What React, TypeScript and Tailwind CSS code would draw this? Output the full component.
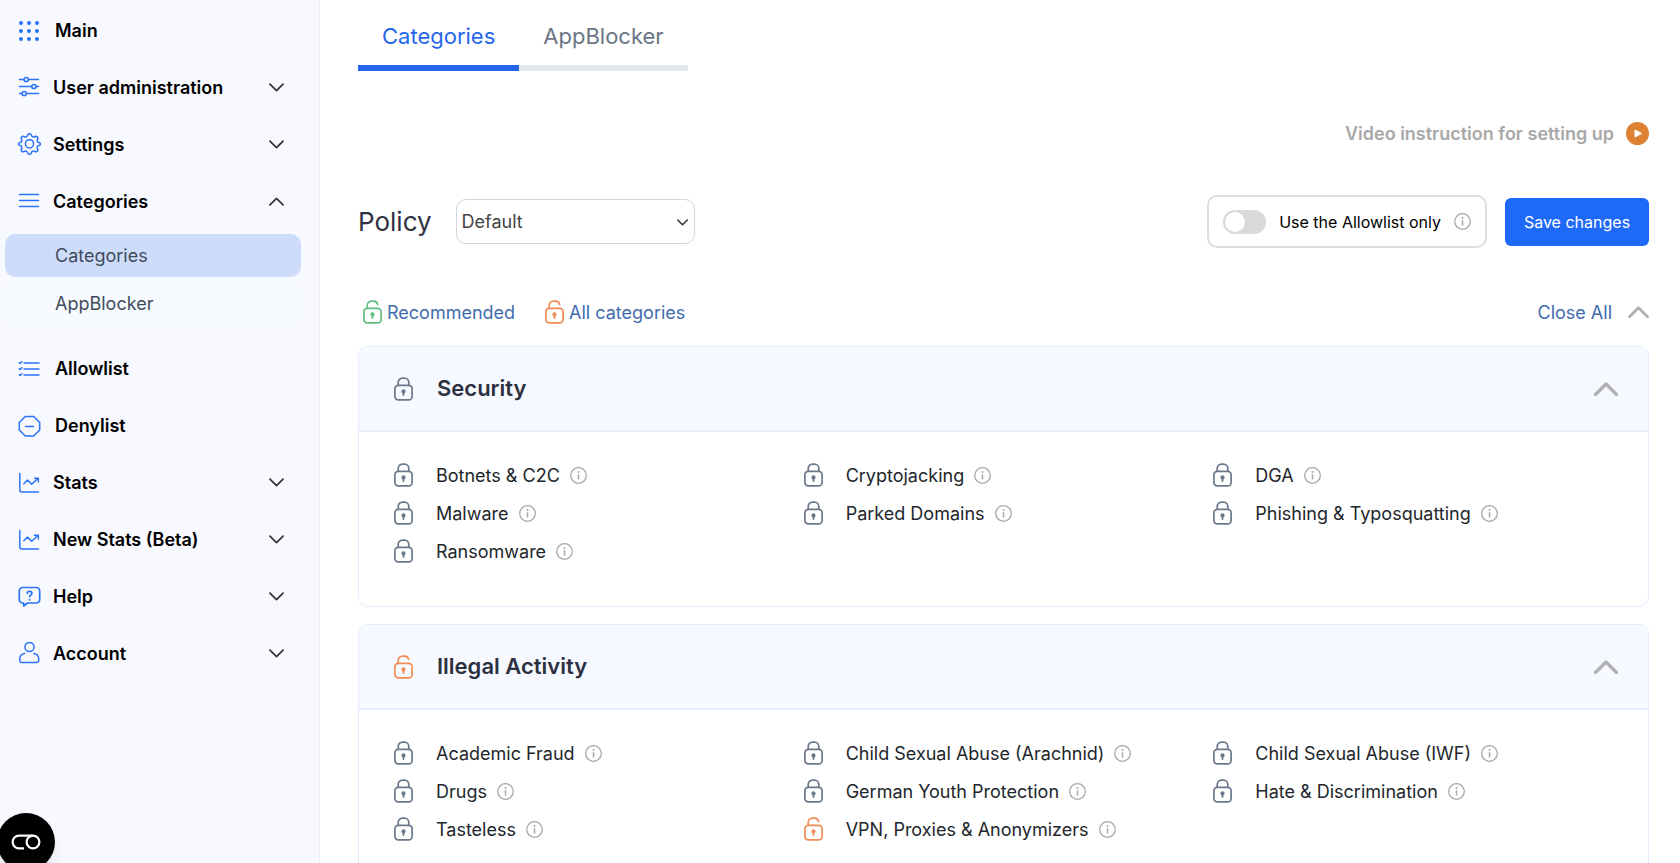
import { useState } from 'react';
import type { ReactNode } from 'react';

type LockState = 'locked' | 'open' | 'recommended';

type Category = { name: string; lock: LockState };

type Group = { title: string; lock: LockState; items: Category[] };

const groups: Group[] = [
  {
    title: 'Security',
    lock: 'locked',
    items: [
      { name: 'Botnets & C2C', lock: 'locked' },
      { name: 'Cryptojacking', lock: 'locked' },
      { name: 'DGA', lock: 'locked' },
      { name: 'Malware', lock: 'locked' },
      { name: 'Parked Domains', lock: 'locked' },
      { name: 'Phishing & Typosquatting', lock: 'locked' },
      { name: 'Ransomware', lock: 'locked' },
    ],
  },
  {
    title: 'Illegal Activity',
    lock: 'open',
    items: [
      { name: 'Academic Fraud', lock: 'locked' },
      { name: 'Child Sexual Abuse (Arachnid)', lock: 'locked' },
      { name: 'Child Sexual Abuse (IWF)', lock: 'locked' },
      { name: 'Drugs', lock: 'locked' },
      { name: 'German Youth Protection', lock: 'locked' },
      { name: 'Hate & Discrimination', lock: 'locked' },
      { name: 'Tasteless', lock: 'locked' },
      { name: 'VPN, Proxies & Anonymizers', lock: 'open' },
    ],
  },
];

const lockColors = {
  locked: 'text-[#6b788c]',
  open: 'text-[#f08c56]',
  recommended: 'text-[#5fbf7e]',
};

function LockIcon({ state }: { state: LockState }) {
  return (
    <svg width="19" height="24" viewBox="0 0 19 24" fill="none" stroke="currentColor" strokeWidth="1.7" strokeLinecap="round" className={lockColors[state]} aria-hidden="true">
      <rect x="0.9" y="8.4" width="17.2" height="14.4" rx="3.4" />
      {state === 'locked' ? (
        <path d="M4.2 8.2V5.4A4.3 4.3 0 0 1 8.5 1.100h2A4.3 4.3 0 0 1 14.8 5.4v2.8" />
      ) : (
        <path d="M4.2 8.2V5.4A4.3 4.3 0 0 1 8.5 1.100h2c2.200 0 3.700 1.200 4.100 3.200" />
      )}
      <circle cx="9.5" cy="14.400" r="2.100" fill="currentColor" stroke="none" />
      <path d="M9.500 15v3" strokeWidth="1.800" />
    </svg>
  );
}

function InfoIcon() {
  return (
    <svg width="17" height="17" viewBox="0 0 17 17" fill="none" stroke="#a9a9a9" aria-hidden="true">
      <circle cx="8.5" cy="8.5" r="7.800" strokeWidth="1.300" />
      <path d="M8.500 7.200v5.400" strokeWidth="1.500" />
      <circle cx="8.500" cy="4.900" r="1" fill="#a9a9a9" stroke="none" />
    </svg>
  );
}

function Chevron({ up = false, className }: { up?: boolean; className: string }) {
  return (
    <svg viewBox="0 0 24 14" fill="none" stroke="currentColor" strokeLinecap="round" strokeLinejoin="round" className={className} aria-hidden="true">
      <path d={up ? 'M1.500 12.500 12 2l10.500 10.500' : 'M1.500 1.500 12 12 22.500 1.500'} />
    </svg>
  );
}

function MenuIcon({ children }: { children: ReactNode }) {
  return (
    <svg width="23" height="23" viewBox="0 0 23 23" fill="none" stroke="#2a73f8" strokeWidth="1.500" strokeLinecap="round" strokeLinejoin="round" className="shrink-0" aria-hidden="true">
      {children}
    </svg>
  );
}

const dots = [3, 11, 19];

const icons = {
  main: (
    <MenuIcon>
      {dots.map((y) => dots.map((x) => <circle key={`${x}-${y}`} cx={x} cy={y + 1} r="2" fill="#2a73f8" stroke="none" />))}
    </MenuIcon>
  ),
  sliders: (
    <MenuIcon>
      <path d="M1.500 3.500H6M10.500 3.500h10M1.500 10.500H13.500M18 10.500h2.500M1.500 17.500H4M8.500 17.500h12" />
      <circle cx="8.200" cy="3.500" r="2.100" />
      <circle cx="15.900" cy="10.500" r="2.100" />
      <circle cx="6.200" cy="17.500" r="2.100" />
    </MenuIcon>
  ),
  gear: (
    <MenuIcon>
      <circle cx="11.500" cy="10.800" r="4.100" />
      <path d="M9.500 2.300C9.900.2 13.100.2 13.500 2.300c.3 1.500 2 2.200 3.200 1.300 1.800-1.200 4 1 2.800 2.800-.9 1.200-.2 2.900 1.300 3.200 2.100.4 2.100 2.400 0 2.800-1.500.3-2.200 2-1.300 3.200 1.200 1.800-1 4-2.800 2.800-1.200-.9-2.900-.2-3.200 1.300-.4 2.100-3.600 2.100-4 0-.3-1.500-2-2.200-3.200-1.300-1.800 1.200-4-1-2.800-2.800.9-1.200.2-2.900-1.300-3.200-2.100-.4-2.100-2.400 0-2.800 1.500-.3 2.200-2 1.300-3.200-1.200-1.800 1-4 2.800-2.800 1.200.9 2.900.2 3.200-1.300z" />
    </MenuIcon>
  ),
  lines: (
    <MenuIcon>
      <path d="M1.500 4.500h19M1.500 10.500h19M1.500 16.500h19" />
    </MenuIcon>
  ),
  checklist: (
    <MenuIcon>
      <path d="M6 6h15M6 12h15M6 18h15" />
      <path d="m1.300 5.800.8.600 1.800-1.600M1.300 11.800l.8.600 1.800-1.600M1.300 17.800l.8.600 1.800-1.600" />
    </MenuIcon>
  ),
  deny: (
    <MenuIcon>
      <path d="M7.300 2.500h8.400l6 6v7.500l-6 6H7.300l-6-6V8.500z" />
      <path d="M7.500 12.500h8" />
    </MenuIcon>
  ),
  chart: (
    <MenuIcon>
      <path d="M1.800 2.500v16.500a2 2 0 0 0 2 2H20.500" />
      <path d="m5.800 12.800 3.700-3.700 4.200 4.200 6.300-6M16.500 7.200H20.300V11" />
    </MenuIcon>
  ),
  help: (
    <MenuIcon>
      <path d="M4.800 2.500h13.400a3.400 3.400 0 0 1 3.500 3.500v8.500a3.400 3.400 0 0 1-3.500 3.500H9.500l-3.800 3v-3h-.9A3.400 3.400 0 0 1 1.300 14.500V6A3.400 3.400 0 0 1 4.800 2.500z" strokeWidth="1.700" />
      <path d="M9.300 8.300c0-2.700 4.600-2.700 4.600 0 0 1.600-2.300 1.600-2.300 3.300M11.600 14.700v.1" strokeWidth="1.800" />
    </MenuIcon>
  ),
  user: (
    <MenuIcon>
      <circle cx="11.500" cy="5" r="4.600" />
      <path d="M6.700 11.600C3.400 12 1.800 14 1.800 17v1.800c0 1 .7 1.700 1.700 1.700h15.500c1 0 1.700-.7 1.700-1.700V17c0-3-1.600-5-4.900-5.400" />
    </MenuIcon>
  ),
};

function MenuLink({ icon, label }: { icon: ReactNode; label: string }) {
  return (
    <a href="#" className="flex h-[57px] items-center gap-[14px] pl-[18px] text-[18px] font-semibold text-black">
      {icon}
      {label}
    </a>
  );
}

function MenuGroup({ icon, label, open = false }: { icon: ReactNode; label: string; open?: boolean }) {
  return (
    <button type="button" aria-expanded={open} className="flex h-[57px] w-full items-center gap-3 pl-[18px] pr-[35px] text-left text-[18px] font-semibold text-black">
      {icon}
      <span className="flex-1">{label}</span>
      <Chevron up={open} className="h-[9px] w-[15px] stroke-[2.7] text-[#333]" />
    </button>
  );
}

function Sidebar() {
  return (
    <nav className="w-80 shrink-0 border-r border-[#ebedf2] bg-[#f8f9ff] pt-[2px]">
      <MenuLink icon={icons.main} label="Main" />
      <MenuGroup icon={icons.sliders} label="User administration" />
      <MenuGroup icon={icons.gear} label="Settings" />
      <MenuGroup icon={icons.lines} label="Categories" open />
      <div className="flex flex-col gap-[5px] pb-[15px] pl-[5px] pr-[18px] pt-1 text-[18px] text-[#414b5a]">
        <a href="#" className="flex h-[43px] items-center rounded-[10px] bg-[#cedcfc] pl-[50px]">Categories</a>
        <a href="#" className="flex h-[43px] items-center rounded-[10px] bg-[#f7faff] pl-[50px]">AppBlocker</a>
      </div>
      <MenuLink icon={icons.checklist} label="Allowlist" />
      <MenuLink icon={icons.deny} label="Denylist" />
      <MenuGroup icon={icons.chart} label="Stats" />
      <MenuGroup icon={icons.chart} label="New Stats (Beta)" />
      <MenuGroup icon={icons.help} label="Help" />
      <MenuGroup icon={icons.user} label="Account" />
    </nav>
  );
}

function CategoryCard({ group }: { group: Group }) {
  return (
    <section className="overflow-hidden rounded-[10px] border border-[#e3ecfd]">
      <h2 className="border-b-2 border-[#e8f0fd] bg-[#f6f9ff]">
        <button type="button" aria-expanded="true" className="flex h-[83px] w-full items-center gap-6 pl-[35px] pr-[30px] text-left text-[22px] font-semibold text-[#2d3040]">
          <LockIcon state={group.lock} />
          <span className="flex-1">{group.title}</span>
          <Chevron up className="h-[14px] w-6 stroke-[3.2] text-[#b0b0b0]" />
        </button>
      </h2>
      <ul className="grid grid-cols-3 pb-9 pl-[35px] pr-[25px] pt-6">
        {group.items.map((item) => (
          <li key={item.name} className="flex h-[38px] items-center text-[18px] text-[#22262b]">
            <button type="button" aria-label={`Toggle ${item.name}`}>
              <LockIcon state={item.lock} />
            </button>
            <span className="ml-[23px] mr-[10px]">{item.name}</span>
            <InfoIcon />
          </li>
        ))}
      </ul>
    </section>
  );
}

export default function App() {
  const [allowlistOnly, setAllowlistOnly] = useState(false);

  return (
    <div className="flex h-screen overflow-hidden bg-white font-['Inter','Liberation_Sans',sans-serif]">
      <Sidebar />
      <main className="min-w-0 flex-1 overflow-y-auto pl-[38px] pr-[31px] [scrollbar-width:none]">
        <div className="flex text-[22px]">
          <a href="#" className="flex h-[71px] items-center border-b-6 border-[#2766eb] px-6 pt-[7px] text-[#2766eb]">Categories</a>
          <a href="#" className="flex h-[71px] items-center border-b-6 border-[#e4e7eb] px-6 pt-[7px] text-[#6b7585]">AppBlocker</a>
        </div>

        <a href="#" className="mt-12 flex h-7 items-center justify-end gap-3 text-[18px] font-semibold text-[#a8a8a8]">
          Video instruction for setting up
          <svg width="23" height="23" viewBox="0 0 23 23" aria-hidden="true">
            <circle cx="11.500" cy="11.500" r="11.500" fill="#dd8132" />
            <path d="M9 8v7l6.500-3.500z" fill="#fff" stroke="#fff" strokeLinejoin="round" />
          </svg>
        </a>

        <div className="mt-12 flex h-[53px] items-center">
          <label htmlFor="policy" className="text-[26px] text-[#2f3142]">Policy</label>
          <div className="relative ml-6">
            <select id="policy" className="block h-[45px] w-[239px] appearance-none rounded-[10px] border border-[#d3d5e0] bg-white pl-[5px] text-[18px] text-[#444]">
              <option>Default</option>
            </select>
            <Chevron className="pointer-events-none absolute right-[7px] top-[20px] h-[7px] w-[11px] stroke-[3.4] text-[#333]" />
          </div>

          <label className="ml-auto flex h-[53px] items-center gap-[13px] rounded-[10px] border-2 border-[#dedede] px-[14px] text-[16px] text-black">
            <input
              type="checkbox"
              role="switch"
              checked={allowlistOnly}
              onChange={(e) => setAllowlistOnly(e.target.checked)}
              className="h-6 w-[43px] appearance-none rounded-full bg-[#d9d9d9] p-[2px] before:block before:size-5 before:rounded-full before:bg-white checked:bg-[#1f69f9] checked:before:ml-auto"
            />
            Use the Allowlist only
            <InfoIcon />
          </label>
          <button type="button" className="ml-[18px] h-12 w-36 rounded-md bg-[#1f69f9] text-[16px] text-white">Save changes</button>
        </div>

        <div className="mt-[49px] flex h-[30px] items-center text-[18px] text-[#426cb0]">
          <button type="button" className="ml-[5px] flex items-center gap-[5px]">
            <LockIcon state="recommended" />
            Recommended
          </button>
          <button type="button" className="ml-[30px] flex items-center gap-[5px]">
            <LockIcon state="open" />
            All categories
          </button>
          <button type="button" className="ml-auto flex items-center gap-4">
            Close All
            <Chevron up className="h-[12px] w-[21px] stroke-[3.2] text-[#b0b0b0]" />
          </button>
        </div>

        <div className="mt-[19px] flex flex-col gap-[17px] pb-6">
          {groups.map((group) => (
            <CategoryCard key={group.title} group={group} />
          ))}
        </div>
      </main>

      <button type="button" aria-label="Cookie settings" className="fixed -bottom-2 -left-[3px] flex size-[58px] items-center justify-center rounded-full bg-black shadow-lg">
        <svg width="30" height="16" viewBox="0 0 30 16" fill="none" stroke="#fff" strokeWidth="2.200" aria-hidden="true">
          <path d="M13 14.400H8A6.400 6.400 0 0 1 8 1.600H22" />
          <circle cx="22" cy="8" r="6.400" />
        </svg>
      </button>
    </div>
  );
}
